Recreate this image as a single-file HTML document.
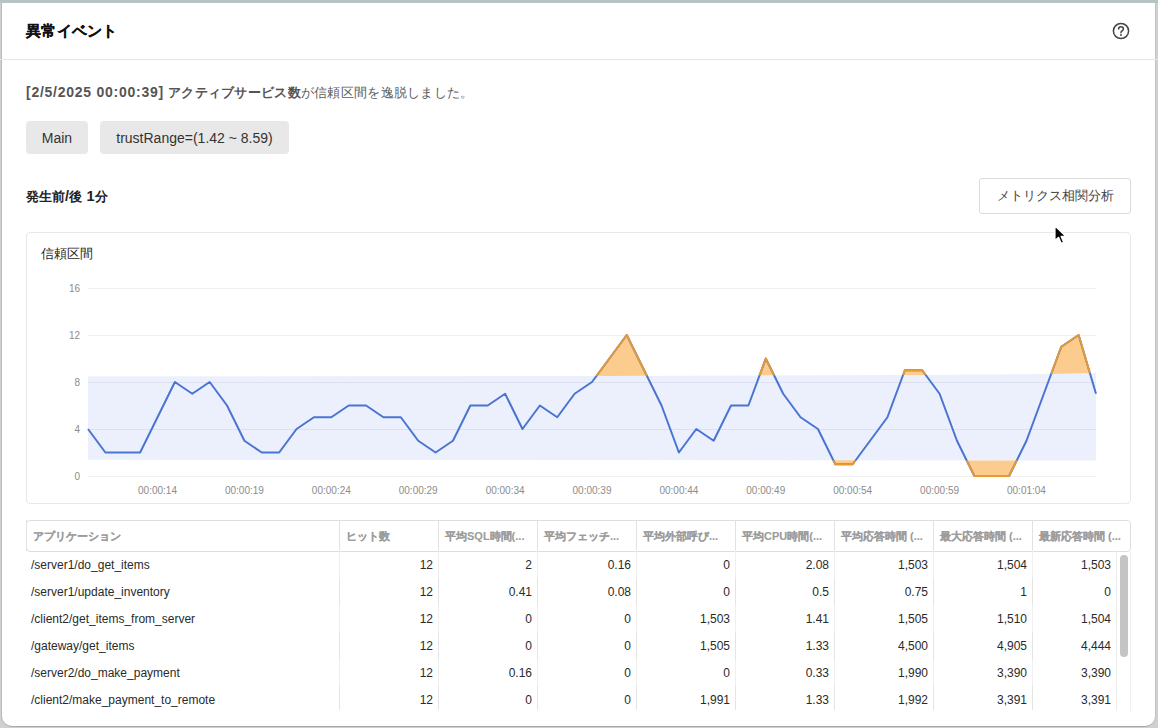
<!DOCTYPE html>
<html><head><meta charset="utf-8">
<style>
html,body{margin:0;padding:0;}
body{width:1158px;height:728px;position:relative;overflow:hidden;background:#d0d0d0;font-family:"Liberation Sans",sans-serif;color:#333;}
.topbar{position:absolute;left:0;top:0;width:1158px;height:3px;background:#b6c4c4;}
.modal{position:absolute;left:2px;top:3px;width:1153px;height:723px;background:#fff;border-radius:0 0 10px 10px;box-shadow:-1px 0 0 #bababa,1px 0 0 #c2c2c2,0 1px 0 #a8a8a8;overflow:hidden;}
.abs{position:absolute;white-space:nowrap;}
.title{left:26px;top:21px;font-size:15px;font-weight:bold;color:#111;line-height:20px;-webkit-text-stroke:0.2px #111;letter-spacing:0.3px;}
.hdiv{position:absolute;left:0;top:59px;width:1158px;height:1px;background:#e6e6e6;}
.msg{left:26px;top:83px;font-size:13px;line-height:18px;color:#5c5c5c;letter-spacing:0.27px;}
.msg .lat{font-size:14px;letter-spacing:0.75px;}
.msg b{letter-spacing:0.3px;}
.msg b{color:#555;font-weight:bold;}
.tag{position:absolute;top:121px;height:33px;line-height:35px;background:#e8e8e8;border-radius:4px;font-size:14px;color:#333;text-align:center;}
.sub .l14{font-size:14.5px;letter-spacing:0.2px;}
.sub{letter-spacing:0px;left:26px;top:187px;font-size:13px;font-weight:bold;color:#222;line-height:18px;}
.btn{position:absolute;left:979px;top:178px;width:150px;height:34px;border:1px solid #dcdcdc;border-radius:3px;font-size:13px;line-height:34px;text-align:center;color:#444;}
.cbox{position:absolute;left:26px;top:232px;width:1103px;height:270px;border:1px solid #e8e8e8;border-radius:4px;}
.ctitle{left:41px;top:245px;font-size:13px;color:#262626;line-height:18px;}
.chart{position:absolute;left:0;top:0;}
.tbl{position:absolute;left:26px;top:520px;width:1105px;height:190px;overflow:hidden;}
.thead{position:absolute;left:0;top:0;width:1103px;height:30px;border:1px solid #dedede;border-radius:4px;}
.th{position:absolute;top:0;height:31px;line-height:33px;font-size:11px;font-weight:bold;color:#9c9c9c;-webkit-text-stroke:0.1px #9c9c9c;padding-left:6px;box-sizing:border-box;border-left:1px solid #e2e2e2;overflow:hidden;white-space:nowrap;}
.th:first-child{border-left:none;}
.td{position:absolute;height:27px;line-height:29px;font-size:12px;color:#2a2a2a;text-align:right;padding-right:5px;box-sizing:border-box;white-space:nowrap;}
.td.l{text-align:left;padding-left:5px;}
.td.last{padding-right:20px;}
.vl{position:absolute;top:31px;width:1px;height:160px;background:#efefef;}
.sbar{position:absolute;left:1120px;top:555px;width:8px;height:102px;background:#c4c4c4;border-radius:4px;}
.sline{position:absolute;left:1116px;top:551px;width:1px;height:160px;background:#ececec;}
.rline{position:absolute;left:1130px;top:551px;width:1px;height:160px;background:#efefef;}
</style></head><body>
<div class="topbar"></div>
<div class="modal">
</div>
<div class="abs title">異常イベント</div>
<svg class="abs" style="left:1112px;top:22px" width="18" height="18" viewBox="0 0 18 18"><circle cx="9" cy="9" r="7.6" fill="none" stroke="#444" stroke-width="1.5"/><path d="M6.6 7.1 C6.6 5.6 7.7 4.8 9 4.8 C10.4 4.8 11.4 5.7 11.4 6.9 C11.4 8.3 9.9 8.7 9.2 9.6 C9 9.9 9 10.3 9 10.8" fill="none" stroke="#444" stroke-width="1.5" stroke-linecap="round"/><circle cx="9" cy="13" r="0.95" fill="#444"/></svg>
<div class="hdiv"></div>
<div class="abs msg"><b><span class="lat">[2/5/2025 00:00:39]</span> アクティブサービス数</b>が信頼区間を逸脱しました。</div>
<div class="tag" style="left:26px;width:62px">Main</div>
<div class="tag" style="left:100px;width:189px">trustRange=(1.42 ~ 8.59)</div>
<div class="abs sub">発生前<span class="l14">/</span>後<span class="l14"> 1</span>分</div>
<div class="btn">メトリクス相関分析</div>
<div class="cbox"></div>
<div class="abs ctitle">信頼区間</div>
<svg class="chart" width="1158" height="728" viewBox="0 0 1158 728">
<path d="M88.00,376.30 L600.00,375.90 L950.00,374.80 L1050.00,374.00 L1096.00,373.00 L1096.00,460.50 L88.00,459.80 Z" fill="#e9edfb" fill-opacity="0.85"/>
<line x1="88" x2="1096" y1="288.5" y2="288.5" stroke="#000" stroke-opacity="0.06" stroke-width="1"/><line x1="88" x2="1096" y1="335.5" y2="335.5" stroke="#000" stroke-opacity="0.06" stroke-width="1"/><line x1="88" x2="1096" y1="382.5" y2="382.5" stroke="#000" stroke-opacity="0.06" stroke-width="1"/><line x1="88" x2="1096" y1="429.5" y2="429.5" stroke="#000" stroke-opacity="0.06" stroke-width="1"/><line x1="88" x2="1096" y1="476.5" y2="476.5" stroke="#000" stroke-opacity="0.06" stroke-width="1"/>
<path d="M596.51,375.90 L609.38,358.50 L626.76,335.00 L644.14,370.25 L646.85,375.75 L646.85,375.75 L600.00,375.90 L596.51,375.90 Z" fill="#fccb8e" stroke="none"/><path d="M759.54,375.40 L765.79,358.50 L774.10,375.35 L774.10,375.35 L759.54,375.40 Z" fill="#fccb8e" stroke="none"/><path d="M903.09,374.95 L904.83,370.25 L922.21,370.25 L925.63,374.88 L925.63,374.88 L903.09,374.95 Z" fill="#fccb8e" stroke="none"/><path d="M1051.17,373.97 L1061.24,346.75 L1078.62,335.00 L1089.90,373.13 L1089.90,373.13 L1051.17,373.97 Z" fill="#fccb8e" stroke="none"/><path d="M833.37,460.32 L835.31,464.25 L852.69,464.25 L855.59,460.33 L855.59,460.33 L833.37,460.32 Z" fill="#fccb8e" stroke="none"/><path d="M966.66,460.41 L974.34,476.00 L991.72,476.00 L1009.10,476.00 L1016.77,460.44 L1016.77,460.44 L966.66,460.41 Z" fill="#fccb8e" stroke="none"/>
<path d="M88.00,429.00 L105.38,452.50 L122.76,452.50 L140.14,452.50 L157.52,417.25 L174.90,382.00 L192.28,393.75 L209.66,382.00 L227.03,405.50 L244.41,440.75 L261.79,452.50 L279.17,452.50 L296.55,429.00 L313.93,417.25 L331.31,417.25 L348.69,405.50 L366.07,405.50 L383.45,417.25 L400.83,417.25 L418.21,440.75 L435.59,452.50 L452.97,440.75 L470.34,405.50 L487.72,405.50 L505.10,393.75 L522.48,429.00 L539.86,405.50 L557.24,417.25 L574.62,393.75 L592.00,382.00 L609.38,358.50 L626.76,335.00 L644.14,370.25 L661.52,405.50 L678.90,452.50 L696.28,429.00 L713.66,440.75 L731.03,405.50 L748.41,405.50 L765.79,358.50 L783.17,393.75 L800.55,417.25 L817.93,429.00 L835.31,464.25 L852.69,464.25 L870.07,440.75 L887.45,417.25 L904.83,370.25 L922.21,370.25 L939.59,393.75 L956.97,440.75 L974.34,476.00 L991.72,476.00 L1009.10,476.00 L1026.48,440.75 L1043.86,393.75 L1061.24,346.75 L1078.62,335.00 L1096.00,393.75" fill="none" stroke="#4a74d2" stroke-width="2" stroke-linejoin="round"/>
<path d="M596.51,375.90 L609.38,358.50 L626.76,335.00 L644.14,370.25 L646.85,375.75" fill="none" stroke="#e99a2e" stroke-width="1.8" stroke-linejoin="round"/><path d="M759.54,375.40 L765.79,358.50 L774.10,375.35" fill="none" stroke="#e99a2e" stroke-width="1.8" stroke-linejoin="round"/><path d="M903.09,374.95 L904.83,370.25 L922.21,370.25 L925.63,374.88" fill="none" stroke="#e99a2e" stroke-width="1.8" stroke-linejoin="round"/><path d="M1051.17,373.97 L1061.24,346.75 L1078.62,335.00 L1089.90,373.13" fill="none" stroke="#e99a2e" stroke-width="1.8" stroke-linejoin="round"/><path d="M833.37,460.32 L835.31,464.25 L852.69,464.25 L855.59,460.33" fill="none" stroke="#e99a2e" stroke-width="1.8" stroke-linejoin="round"/><path d="M966.66,460.41 L974.34,476.00 L991.72,476.00 L1009.10,476.00 L1016.77,460.44" fill="none" stroke="#e99a2e" stroke-width="1.8" stroke-linejoin="round"/>
<g font-family="Liberation Sans, sans-serif" font-size="10" fill="#8c8c8c"><text x="80" y="291.5" text-anchor="end">16</text><text x="80" y="338.5" text-anchor="end">12</text><text x="80" y="385.5" text-anchor="end">8</text><text x="80" y="432.5" text-anchor="end">4</text><text x="80" y="479.5" text-anchor="end">0</text><text x="157.52" y="494" text-anchor="middle">00:00:14</text><text x="244.41" y="494" text-anchor="middle">00:00:19</text><text x="331.31" y="494" text-anchor="middle">00:00:24</text><text x="418.21" y="494" text-anchor="middle">00:00:29</text><text x="505.10" y="494" text-anchor="middle">00:00:34</text><text x="592.00" y="494" text-anchor="middle">00:00:39</text><text x="678.90" y="494" text-anchor="middle">00:00:44</text><text x="765.79" y="494" text-anchor="middle">00:00:49</text><text x="852.69" y="494" text-anchor="middle">00:00:54</text><text x="939.59" y="494" text-anchor="middle">00:00:59</text><text x="1026.48" y="494" text-anchor="middle">00:01:04</text></g>
</svg>
<div class="tbl">
<div class="thead"></div>
<div class="th" style="left:0px;width:313px">アプリケーション</div><div class="th" style="left:313px;width:99px">ヒット数</div><div class="th" style="left:412px;width:99px">平均SQL時間(...</div><div class="th" style="left:511px;width:99px">平均フェッチ...</div><div class="th" style="left:610px;width:99px">平均外部呼び...</div><div class="th" style="left:709px;width:99px">平均CPU時間(...</div><div class="th" style="left:808px;width:99px">平均応答時間 (...</div><div class="th" style="left:907px;width:99px">最大応答時間 (...</div><div class="th" style="left:1006px;width:99px">最新応答時間 (...</div>
<div class="vl" style="left:313px;top:31px;height:27px;background:#efefef"></div><div class="vl" style="left:313px;top:58px;height:27px;background:#e4e4e4"></div><div class="vl" style="left:313px;top:85px;height:27px;background:#efefef"></div><div class="vl" style="left:313px;top:112px;height:27px;background:#e4e4e4"></div><div class="vl" style="left:313px;top:139px;height:27px;background:#efefef"></div><div class="vl" style="left:313px;top:166px;height:27px;background:#e4e4e4"></div><div class="vl" style="left:313px;top:193px;height:27px;background:#efefef"></div><div class="vl" style="left:412px;top:31px;height:27px;background:#efefef"></div><div class="vl" style="left:412px;top:58px;height:27px;background:#e4e4e4"></div><div class="vl" style="left:412px;top:85px;height:27px;background:#efefef"></div><div class="vl" style="left:412px;top:112px;height:27px;background:#e4e4e4"></div><div class="vl" style="left:412px;top:139px;height:27px;background:#efefef"></div><div class="vl" style="left:412px;top:166px;height:27px;background:#e4e4e4"></div><div class="vl" style="left:412px;top:193px;height:27px;background:#efefef"></div><div class="vl" style="left:511px;top:31px;height:27px;background:#efefef"></div><div class="vl" style="left:511px;top:58px;height:27px;background:#e4e4e4"></div><div class="vl" style="left:511px;top:85px;height:27px;background:#efefef"></div><div class="vl" style="left:511px;top:112px;height:27px;background:#e4e4e4"></div><div class="vl" style="left:511px;top:139px;height:27px;background:#efefef"></div><div class="vl" style="left:511px;top:166px;height:27px;background:#e4e4e4"></div><div class="vl" style="left:511px;top:193px;height:27px;background:#efefef"></div><div class="vl" style="left:610px;top:31px;height:27px;background:#efefef"></div><div class="vl" style="left:610px;top:58px;height:27px;background:#e4e4e4"></div><div class="vl" style="left:610px;top:85px;height:27px;background:#efefef"></div><div class="vl" style="left:610px;top:112px;height:27px;background:#e4e4e4"></div><div class="vl" style="left:610px;top:139px;height:27px;background:#efefef"></div><div class="vl" style="left:610px;top:166px;height:27px;background:#e4e4e4"></div><div class="vl" style="left:610px;top:193px;height:27px;background:#efefef"></div><div class="vl" style="left:709px;top:31px;height:27px;background:#efefef"></div><div class="vl" style="left:709px;top:58px;height:27px;background:#e4e4e4"></div><div class="vl" style="left:709px;top:85px;height:27px;background:#efefef"></div><div class="vl" style="left:709px;top:112px;height:27px;background:#e4e4e4"></div><div class="vl" style="left:709px;top:139px;height:27px;background:#efefef"></div><div class="vl" style="left:709px;top:166px;height:27px;background:#e4e4e4"></div><div class="vl" style="left:709px;top:193px;height:27px;background:#efefef"></div><div class="vl" style="left:808px;top:31px;height:27px;background:#efefef"></div><div class="vl" style="left:808px;top:58px;height:27px;background:#e4e4e4"></div><div class="vl" style="left:808px;top:85px;height:27px;background:#efefef"></div><div class="vl" style="left:808px;top:112px;height:27px;background:#e4e4e4"></div><div class="vl" style="left:808px;top:139px;height:27px;background:#efefef"></div><div class="vl" style="left:808px;top:166px;height:27px;background:#e4e4e4"></div><div class="vl" style="left:808px;top:193px;height:27px;background:#efefef"></div><div class="vl" style="left:907px;top:31px;height:27px;background:#efefef"></div><div class="vl" style="left:907px;top:58px;height:27px;background:#e4e4e4"></div><div class="vl" style="left:907px;top:85px;height:27px;background:#efefef"></div><div class="vl" style="left:907px;top:112px;height:27px;background:#e4e4e4"></div><div class="vl" style="left:907px;top:139px;height:27px;background:#efefef"></div><div class="vl" style="left:907px;top:166px;height:27px;background:#e4e4e4"></div><div class="vl" style="left:907px;top:193px;height:27px;background:#efefef"></div><div class="vl" style="left:1006px;top:31px;height:27px;background:#efefef"></div><div class="vl" style="left:1006px;top:58px;height:27px;background:#e4e4e4"></div><div class="vl" style="left:1006px;top:85px;height:27px;background:#efefef"></div><div class="vl" style="left:1006px;top:112px;height:27px;background:#e4e4e4"></div><div class="vl" style="left:1006px;top:139px;height:27px;background:#efefef"></div><div class="vl" style="left:1006px;top:166px;height:27px;background:#e4e4e4"></div><div class="vl" style="left:1006px;top:193px;height:27px;background:#efefef"></div>
<div class="td l" style="left:0px;top:31px;width:313px">/server1/do_get_items</div><div class="td" style="left:313px;top:31px;width:99px">12</div><div class="td" style="left:412px;top:31px;width:99px">2</div><div class="td" style="left:511px;top:31px;width:99px">0.16</div><div class="td" style="left:610px;top:31px;width:99px">0</div><div class="td" style="left:709px;top:31px;width:99px">2.08</div><div class="td" style="left:808px;top:31px;width:99px">1,503</div><div class="td" style="left:907px;top:31px;width:99px">1,504</div><div class="td last" style="left:1006px;top:31px;width:99px">1,503</div><div class="td l" style="left:0px;top:58px;width:313px">/server1/update_inventory</div><div class="td" style="left:313px;top:58px;width:99px">12</div><div class="td" style="left:412px;top:58px;width:99px">0.41</div><div class="td" style="left:511px;top:58px;width:99px">0.08</div><div class="td" style="left:610px;top:58px;width:99px">0</div><div class="td" style="left:709px;top:58px;width:99px">0.5</div><div class="td" style="left:808px;top:58px;width:99px">0.75</div><div class="td" style="left:907px;top:58px;width:99px">1</div><div class="td last" style="left:1006px;top:58px;width:99px">0</div><div class="td l" style="left:0px;top:85px;width:313px">/client2/get_items_from_server</div><div class="td" style="left:313px;top:85px;width:99px">12</div><div class="td" style="left:412px;top:85px;width:99px">0</div><div class="td" style="left:511px;top:85px;width:99px">0</div><div class="td" style="left:610px;top:85px;width:99px">1,503</div><div class="td" style="left:709px;top:85px;width:99px">1.41</div><div class="td" style="left:808px;top:85px;width:99px">1,505</div><div class="td" style="left:907px;top:85px;width:99px">1,510</div><div class="td last" style="left:1006px;top:85px;width:99px">1,504</div><div class="td l" style="left:0px;top:112px;width:313px">/gateway/get_items</div><div class="td" style="left:313px;top:112px;width:99px">12</div><div class="td" style="left:412px;top:112px;width:99px">0</div><div class="td" style="left:511px;top:112px;width:99px">0</div><div class="td" style="left:610px;top:112px;width:99px">1,505</div><div class="td" style="left:709px;top:112px;width:99px">1.33</div><div class="td" style="left:808px;top:112px;width:99px">4,500</div><div class="td" style="left:907px;top:112px;width:99px">4,905</div><div class="td last" style="left:1006px;top:112px;width:99px">4,444</div><div class="td l" style="left:0px;top:139px;width:313px">/server2/do_make_payment</div><div class="td" style="left:313px;top:139px;width:99px">12</div><div class="td" style="left:412px;top:139px;width:99px">0.16</div><div class="td" style="left:511px;top:139px;width:99px">0</div><div class="td" style="left:610px;top:139px;width:99px">0</div><div class="td" style="left:709px;top:139px;width:99px">0.33</div><div class="td" style="left:808px;top:139px;width:99px">1,990</div><div class="td" style="left:907px;top:139px;width:99px">3,390</div><div class="td last" style="left:1006px;top:139px;width:99px">3,390</div><div class="td l" style="left:0px;top:166px;width:313px">/client2/make_payment_to_remote</div><div class="td" style="left:313px;top:166px;width:99px">12</div><div class="td" style="left:412px;top:166px;width:99px">0</div><div class="td" style="left:511px;top:166px;width:99px">0</div><div class="td" style="left:610px;top:166px;width:99px">1,991</div><div class="td" style="left:709px;top:166px;width:99px">1.33</div><div class="td" style="left:808px;top:166px;width:99px">1,992</div><div class="td" style="left:907px;top:166px;width:99px">3,391</div><div class="td last" style="left:1006px;top:166px;width:99px">3,391</div>
</div>
<div class="sline"></div>
<div class="rline"></div>
<div class="sbar"></div>
<svg class="abs" style="left:1054px;top:225px" width="14" height="20" viewBox="0 0 14 20"><path d="M1 1 L1 15.5 L4.6 12.3 L7.2 18.2 L9.6 17.2 L7.1 11.4 L11.8 11.4 Z" fill="#000" stroke="#fff" stroke-width="1.2" stroke-linejoin="round"/></svg>
</body></html>
